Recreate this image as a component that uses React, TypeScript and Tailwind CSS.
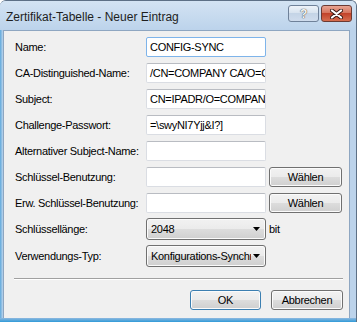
import React from 'react';

const font = { fontFamily: '"Liberation Sans", Arial, sans-serif' };

const btnBg =
  'bg-[linear-gradient(#f2f2f2,#ebebeb_50%,#dddddd_50%,#cfcfcf)] shadow-[inset_0_0_0_1px_#fbfbfb]';

interface FieldProps {
  value?: string;
  focused?: boolean;
}

const Field: React.FC<FieldProps> = ({ value, focused }) => (
  <div
    className={`w-[120px] h-[20px] bg-white rounded-[2px] border flex items-center pl-[3px] overflow-hidden whitespace-nowrap ${
      focused ? 'border-[#7eb4ea]' : 'border-[#dadde3] border-t-[#b9bcc2]'
    }`}
  >
    {value}
  </div>
);

const Button: React.FC<{ label: string; className?: string; isDefault?: boolean }> = ({ label, className, isDefault }) => (
  <div
    className={`h-[20px] rounded-[3px] border flex items-center justify-center ${btnBg} ${
      isDefault ? 'border-[#3c7fb1] shadow-[inset_0_0_0_1px_#8fd3f5]' : 'border-[#707070]'
    } ${className ?? ''}`}
  >
    {label}
  </div>
);

const Combo: React.FC<{ value: string }> = ({ value }) => (
  <div className={`w-[120px] h-[22px] rounded-[3px] border border-[#707070] flex items-center pl-[4px] pr-[4px] ${btnBg}`}>
    <span className="flex-1 overflow-hidden whitespace-nowrap">{value}</span>
    <svg width="8" height="5" viewBox="0 0 8 5" className="ml-[2px]">
      <path d="M0 0h7L3.5 4z" fill="#000" />
    </svg>
  </div>
);

const Row: React.FC<{ label: string; children: React.ReactNode; className?: string }> = ({ label, children, className }) => (
  <div className={`flex items-center ${className ?? ''}`}>
    <div className="w-[131px] whitespace-nowrap">{label}</div>
    {children}
  </div>
);

export default function App() {
  return (
    <div
      className="w-[357px] h-[322px] overflow-hidden flex flex-col bg-[#bcd3eb] rounded-t-[6px] border-t border-r border-[#5d7086] text-[11px] text-black tracking-[-0.3px]"
      style={font}
    >
      {/* title bar */}
      <div className="h-[29px] flex items-start bg-[linear-gradient(#d3e3f3,#bcd3eb)] pl-[6px]">
        <div className="pt-[7px] text-[12px] tracking-[0px] text-[#1e1e1e]">Zertifikat-Tabelle - Neuer Eintrag</div>
        <div className="ml-auto mt-[4px] mr-[4px] flex gap-[2px]">
          <div className="w-[31px] h-[17px] rounded-[3px] border border-[#6f8199] bg-[linear-gradient(#eef3f9,#d5e1ee_50%,#c4d4e6_50%,#cfdced)] flex items-center justify-center">
            <span
              className="text-[12px] font-bold leading-none text-[#f4f4f4]"
              style={{ textShadow: '0 0 1px #4a4a4a, 0 0 1px #4a4a4a' }}
            >
              ?
            </span>
          </div>
          <div className="w-[31px] h-[17px] rounded-[3px] border border-[#6b3a33] bg-[linear-gradient(#e8a493,#d47058_50%,#c2432a_50%,#d66d4f)] flex items-center justify-center">
            <svg width="13" height="10" viewBox="0 0 13 10">
              <path d="M2 1.5l9 7M11 1.5l-9 7" stroke="#3a1b16" strokeWidth="4" strokeLinecap="round" />
              <path d="M2 1.5l9 7M11 1.5l-9 7" stroke="#ffffff" strokeWidth="2.2" strokeLinecap="round" />
            </svg>
          </div>
        </div>
      </div>

      {/* body */}
      <div className="flex flex-1">
        <div className="w-[3px] bg-[linear-gradient(90deg,#5fa9dc,#bcd3eb)]" />
        <div className="w-[347px] flex flex-col">
          <div className="h-[288px] bg-[#f0f0f0] border-x border-t border-[#8ea6c1] pl-[11px] pt-[6px] flex flex-col">
            <Row label="Name:">
              <Field value="CONFIG-SYNC" focused />
            </Row>
            <Row label="CA-Distinguished-Name:" className="mt-[6px]">
              <Field value="/CN=COMPANY CA/O=COMPANY" />
            </Row>
            <Row label="Subject:" className="mt-[6px]">
              <Field value="CN=IPADR/O=COMPANY" />
            </Row>
            <Row label="Challenge-Passwort:" className="mt-[6px]">
              <Field value="=\swyNI7Yjj&I?]" />
            </Row>
            <Row label="Alternativer Subject-Name:" className="mt-[6px]">
              <Field />
            </Row>
            <Row label="Schlüssel-Benutzung:" className="mt-[6px]">
              <Field />
              <Button label="Wählen" className="w-[73px] ml-[3px]" />
            </Row>
            <Row label="Erw. Schlüssel-Benutzung:" className="mt-[6px]">
              <Field />
              <Button label="Wählen" className="w-[73px] ml-[3px]" />
            </Row>
            <Row label="Schlüssellänge:" className="mt-[5px]">
              <Combo value="2048" />
              <span className="ml-[3px]">bit</span>
            </Row>
            <Row label="Verwendungs-Typ:" className="mt-[5px]">
              <Combo value="Konfigurations-Synchronisation" />
            </Row>
            <div className="mt-[11px] ml-[-1px] w-[329px] h-[2px] border-t border-b border-t-[#a0a0a0] border-b-white" />
            <div className="mt-[10px] flex ml-[175px]">
              <Button label="OK" className="w-[71px]" isDefault />
              <Button label="Abbrechen" className="w-[72px] ml-[10px]" />
            </div>
          </div>
        </div>
        <div className="flex-1 bg-[#bcd3eb]" />
      </div>
      <div className="h-[4px] bg-[linear-gradient(#8fb8df,#2f9ad8)]" />
    </div>
  );
}
